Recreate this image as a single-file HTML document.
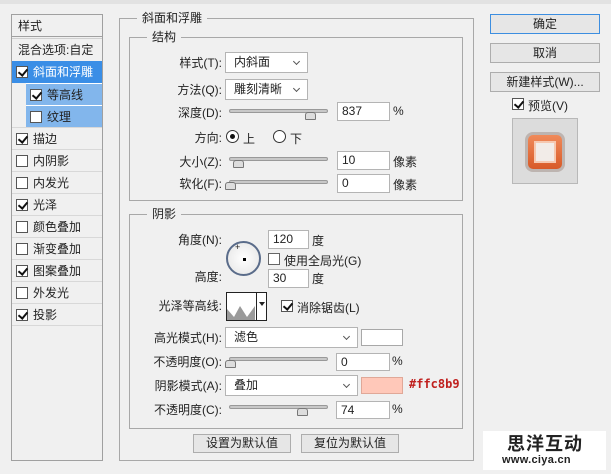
<!DOCTYPE html>
<html><head><meta charset="utf-8"><style>
*{margin:0;padding:0;box-sizing:border-box}
body{width:611px;height:474px;background:#f0f0f0;font-family:"Liberation Sans","Noto Sans CJK SC",sans-serif;font-size:12px;color:#222;position:relative;overflow:hidden}
.a{position:absolute;white-space:nowrap}
.box{position:absolute;border:1px solid #a8a8a8}
.lbl{position:absolute;text-align:right;white-space:nowrap;line-height:14px}
.inp{position:absolute;background:#fff;border:1px solid #b4b4b4;padding-left:4px;line-height:17px;font-size:12px}
.sel{position:absolute;background:#fff;border:1px solid #b4b4b4;padding-left:8px;line-height:19px}
.sel:after{content:"";position:absolute;right:8px;top:6px;width:4px;height:4px;border-right:1.5px solid #555;border-bottom:1.5px solid #555;transform:rotate(45deg)}
.slider{position:absolute;height:4px;background:#c8c8c8;border:1px solid #999;border-radius:2px}
.thumb{position:absolute;width:11px;height:8px;background:#ddd;border:1px solid #777;border-radius:3px 3px 1px 1px}
.cb{position:absolute;width:12px;height:12px;background:#fff;border:1px solid #555}
.ck:after{content:"";position:absolute;left:3px;top:0px;width:4px;height:7px;border-right:2px solid #111;border-bottom:2px solid #111;transform:rotate(40deg)}
.item{position:absolute;left:12px;width:90px;height:22px;line-height:22px;border-top:1px solid #d8d8d8}
.item .cb{left:4px;top:5px}
.item span{position:absolute;left:21px}
.btn{position:absolute;background:#e6e6e6;border:1px solid #adadad;text-align:center;line-height:17px}
.leg{position:absolute;background:#f0f0f0;padding:0 5px;line-height:14px}
</style></head><body>
<div style="position:absolute;left:0;top:0;width:611px;height:4px;background:#e2e2e2"></div>
<div class="box" style="left:11px;top:14px;width:92px;height:447px;border-color:#a0a0a0"></div>
<div class="a" style="left:18px;top:17px">样式</div>
<div style="position:absolute;left:12px;top:36px;width:90px;border-top:1px solid #a0a0a0;border-bottom:1px solid #d0d0d0;height:3px"></div>
<div class="a" style="left:18px;top:41px">混合选项:自定</div>
<div class="item" style="top:61px;background:#3a8ee6;color:#fff;border:none"><div class="cb ck"></div><span>斜面和浮雕</span></div>
<div class="item" style="top:83px;left:26px;width:76px;background:#82b6ec;border-top:1px solid #fff"><div class="cb ck"></div><span>等高线</span></div>
<div class="item" style="top:105px;left:26px;width:76px;background:#82b6ec;border-top:1px solid #fff"><div class="cb"></div><span>纹理</span></div>
<div class="item" style="top:127px"><div class="cb ck"></div><span>描边</span></div>
<div class="item" style="top:149px"><div class="cb"></div><span>内阴影</span></div>
<div class="item" style="top:171px"><div class="cb"></div><span>内发光</span></div>
<div class="item" style="top:193px"><div class="cb ck"></div><span>光泽</span></div>
<div class="item" style="top:215px"><div class="cb"></div><span>颜色叠加</span></div>
<div class="item" style="top:237px"><div class="cb"></div><span>渐变叠加</span></div>
<div class="item" style="top:259px"><div class="cb ck"></div><span>图案叠加</span></div>
<div class="item" style="top:281px"><div class="cb"></div><span>外发光</span></div>
<div class="item" style="top:303px"><div class="cb ck"></div><span>投影</span></div>
<div class="item" style="top:325px;height:2px"></div>

<div class="box" style="left:119px;top:18px;width:355px;height:443px"></div>
<div class="leg" style="left:137px;top:11px">斜面和浮雕</div>
<div class="box" style="left:129px;top:37px;width:334px;height:164px"></div>
<div class="leg" style="left:147px;top:30px">结构</div>
<div class="lbl" style="right:389px;top:56px">样式(T):</div>
<div class="sel" style="left:225px;top:52px;width:83px;height:21px">内斜面</div>
<div class="lbl" style="right:389px;top:83px">方法(Q):</div>
<div class="sel" style="left:225px;top:79px;width:83px;height:21px">雕刻清晰</div>
<div class="lbl" style="right:389px;top:106px">深度(D):</div>
<div class="slider" style="left:229px;top:109px;width:99px"></div>
<div class="thumb" style="left:305px;top:112px"></div>
<div class="inp" style="left:337px;top:102px;width:53px;height:19px">837</div>
<div class="a" style="left:393px;top:104px">%</div>
<div class="lbl" style="right:389px;top:131px">方向:</div>
<div style="position:absolute;left:226px;top:130px;width:13px;height:13px;border:1px solid #333;border-radius:50%;background:#fff"><div style="position:absolute;left:3px;top:3px;width:5px;height:5px;border-radius:50%;background:#111"></div></div>
<div class="a" style="left:243px;top:130px">上</div>
<div style="position:absolute;left:273px;top:130px;width:13px;height:13px;border:1px solid #333;border-radius:50%;background:#fff"></div>
<div class="a" style="left:290px;top:130px">下</div>
<div class="lbl" style="right:389px;top:155px">大小(Z):</div>
<div class="slider" style="left:229px;top:157px;width:99px"></div>
<div class="thumb" style="left:233px;top:160px"></div>
<div class="inp" style="left:337px;top:151px;width:53px;height:19px">10</div>
<div class="a" style="left:393px;top:153px">像素</div>
<div class="lbl" style="right:389px;top:177px">软化(F):</div>
<div class="slider" style="left:229px;top:180px;width:99px"></div>
<div class="thumb" style="left:225px;top:182px"></div>
<div class="inp" style="left:337px;top:174px;width:53px;height:19px">0</div>
<div class="a" style="left:393px;top:176px">像素</div>

<div class="box" style="left:129px;top:214px;width:334px;height:215px"></div>
<div class="leg" style="left:147px;top:207px">阴影</div>
<div class="lbl" style="right:389px;top:233px">角度(N):</div>
<div style="position:absolute;left:226px;top:241px;width:35px;height:35px;border:2px solid #5a6c8a;border-radius:50%;background:radial-gradient(#fff,#e4e4e4)"><div style="position:absolute;left:15px;top:15px;width:3px;height:3px;background:#000"></div><div class="a" style="left:7px;top:-1px;font-size:9px">+</div></div>
<div class="inp" style="left:268px;top:230px;width:41px;height:19px">120</div>
<div class="a" style="left:312px;top:232px">度</div>
<div class="cb" style="left:268px;top:253px;border-color:#666"></div>
<div class="a" style="left:284px;top:252px">使用全局光(G)</div>
<div class="lbl" style="right:389px;top:270px">高度:</div>
<div class="inp" style="left:268px;top:269px;width:41px;height:19px">30</div>
<div class="a" style="left:312px;top:270px">度</div>
<div class="lbl" style="right:389px;top:299px">光泽等高线:</div>
<div style="position:absolute;left:226px;top:292px;width:41px;height:29px;border:1px solid #222;background:#fff">
<svg width="29" height="27" style="position:absolute;left:0;top:0"><polygon points="0,27 0,16 7,24 13,13 20,24 28,13 28,27" fill="#9a9a9a"/></svg>
<div style="position:absolute;left:29px;top:0;width:1px;height:27px;background:#222"></div>
<div style="position:absolute;left:32px;top:9px;border:3px solid transparent;border-top:4px solid #222"></div></div>
<div class="cb ck" style="left:281px;top:300px"></div>
<div class="a" style="left:297px;top:299px">消除锯齿(L)</div>
<div class="lbl" style="right:389px;top:331px">高光模式(H):</div>
<div class="sel" style="left:225px;top:327px;width:133px;height:21px">滤色</div>
<div class="box" style="left:361px;top:329px;width:42px;height:17px;background:#fff"></div>
<div class="lbl" style="right:389px;top:355px">不透明度(O):</div>
<div class="slider" style="left:229px;top:357px;width:99px"></div>
<div class="thumb" style="left:225px;top:360px"></div>
<div class="inp" style="left:336px;top:353px;width:54px;height:18px">0</div>
<div class="a" style="left:392px;top:354px">%</div>
<div class="lbl" style="right:389px;top:379px">阴影模式(A):</div>
<div class="sel" style="left:225px;top:375px;width:133px;height:21px">叠加</div>
<div class="box" style="left:361px;top:377px;width:42px;height:17px;background:#ffc8b9;border-color:#e0a898"></div>
<div class="a" style="left:409px;top:377px;color:#c0201e;font-weight:bold;font-family:'DejaVu Sans Mono',monospace;font-size:12px">#ffc8b9</div>
<div class="lbl" style="right:389px;top:403px">不透明度(C):</div>
<div class="slider" style="left:229px;top:405px;width:99px"></div>
<div class="thumb" style="left:297px;top:408px"></div>
<div class="inp" style="left:336px;top:401px;width:54px;height:18px">74</div>
<div class="a" style="left:392px;top:402px">%</div>
<div class="btn" style="left:193px;top:434px;width:98px;height:19px">设置为默认值</div>
<div class="btn" style="left:301px;top:434px;width:98px;height:19px">复位为默认值</div>

<div class="btn" style="left:490px;top:14px;width:110px;height:20px;border-color:#3c8ee0;line-height:18px">确定</div>
<div class="btn" style="left:490px;top:43px;width:110px;height:20px;line-height:18px">取消</div>
<div class="btn" style="left:490px;top:72px;width:110px;height:20px;line-height:18px">新建样式(W)...</div>
<div class="cb ck" style="left:512px;top:98px"></div>
<div class="a" style="left:528px;top:97px">预览(V)</div>
<div class="box" style="left:512px;top:118px;width:66px;height:66px;background:#dcdcdc;border-color:#b8b8b8">
<div style="position:absolute;left:12px;top:13px;width:40px;height:40px;border-radius:8px;background:#bdb4b0"></div>
<div style="position:absolute;left:15px;top:16px;width:34px;height:34px;border-radius:5px;background:linear-gradient(#f08a5a,#d85a28)"></div>
<div style="position:absolute;left:21px;top:22px;width:22px;height:22px;background:#f2ece8;border:2px solid #f6c8b0"></div></div>

<div style="position:absolute;left:483px;top:431px;width:123px;height:39px;background:#fff"></div>
<div class="a" style="left:507px;top:431px;font-size:18px;font-weight:bold;letter-spacing:1px;font-family:'Noto Sans CJK SC',sans-serif;line-height:24px">思洋互动</div>
<div class="a" style="left:502px;top:454px;font-size:11px;font-weight:bold;line-height:13px;letter-spacing:0.3px">www.ciya.cn</div>
</body></html>
